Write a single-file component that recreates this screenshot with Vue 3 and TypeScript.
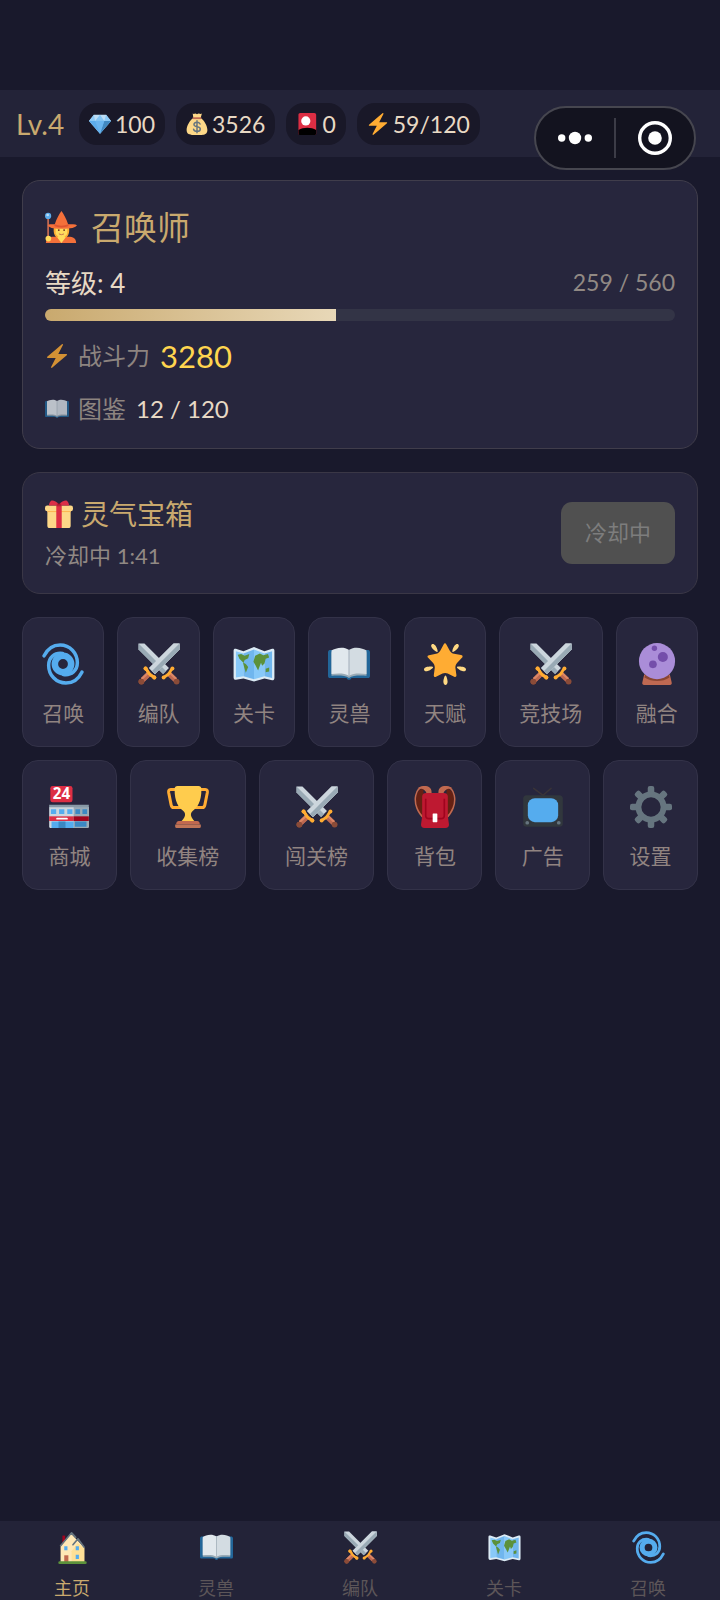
<script setup lang="ts">
interface Entry {
  icon: string
  label: string
  badge?: string
}

const resources: { icon: string; name: string; value: string }[] = [
  { icon: 'gem', name: '钻石', value: '100' },
  { icon: 'money', name: '金币', value: '3526' },
  { icon: 'card', name: '卡牌', value: '0' },
  { icon: 'bolt', name: '体力', value: '59/120' },
]

const exp = { current: 259, max: 560 }

const entries: Entry[] = [
  { icon: 'cyclone', label: '召唤' },
  { icon: 'swords', label: '编队' },
  { icon: 'map', label: '关卡' },
  { icon: 'book', label: '灵兽' },
  { icon: 'star', label: '天赋' },
  { icon: 'swords', label: '竞技场' },
  { icon: 'orb', label: '融合' },
  { icon: 'store', label: '商城', badge: '24' },
  { icon: 'trophy', label: '收集榜' },
  { icon: 'swords', label: '闯关榜' },
  { icon: 'bag', label: '背包' },
  { icon: 'tv', label: '广告' },
  { icon: 'gear', label: '设置' },
]

const tabs: (Entry & { href: string })[] = [
  { icon: 'house', label: '主页', href: '#home' },
  { icon: 'book', label: '灵兽', href: '#beasts' },
  { icon: 'swords', label: '编队', href: '#team' },
  { icon: 'map', label: '关卡', href: '#stages' },
  { icon: 'cyclone', label: '召唤', href: '#summon' },
]
</script>

<template>
  <div class="page">
    <svg class="sprite" width="0" height="0" aria-hidden="true">
      <symbol id="i-gem" viewBox="0 0 36 36">
        <path fill="#BDDDF4" d="M8 3h20l8 10-18 21L0 13z" />
        <path fill="#5DADEC" d="M0 13l18 21 18-21z" />
        <path fill="#8CCAF7" d="M8 3L0 13h10zM28 3l-3 10h11z" />
        <path fill="#4289C1" d="M36 13H25l-7 21z" />
        <path fill="#82C4F3" d="M10 13l8-10 7 10z" />
        <path fill="#6BB6F0" d="M10 13h15l-7 21z" />
      </symbol>
      <symbol id="i-money" viewBox="0 0 36 36">
        <path fill="#FDD888" d="M11 1c2 1 3 0 4 0s2 1 3 1 2-1 3-1 3 1 5 0l-2 7c6 4 11 13 11 20 0 6-4 8-9 8H10c-5 0-9-2-9-8C1 21 6 12 12 8z" />
        <path fill="#BF6952" d="M11 7h14v3H11z" />
        <path fill="none" stroke="#67757F" stroke-width="2.400" stroke-linecap="round" d="M23 18c-1-2-3-3-5-3-3 0-5 1.300-5 3.800 0 5.200 10.400 2.200 10.400 7.200 0 2.500-2 4-5.400 4-3 0-5-1.200-5.600-3.500M18 12.500v20" />
      </symbol>
      <symbol id="i-card" viewBox="0 0 36 36">
        <rect x="4" width="29" height="36" rx="3" fill="#DD2E44" />
        <path fill="#000" d="M4 28c8-5 21-5 29 0v5c0 2-1 3-3 3H7c-2 0-3-1-3-3z" />
        <circle cx="16" cy="13" r="7.500" fill="#FFF" />
      </symbol>
      <symbol id="i-bolt" viewBox="0 0 36 36">
        <path fill="#FFAC33" d="M32.938 15.651C32.792 15.260 32.418 15 32 15H19.925L26.890 1.458c.219-.426.106-.947-.271-1.243C26.437.071 26.218 0 26 0c-.233 0-.466.082-.653.243L18 6.588 3.347 19.243c-.316.273-.430.714-.284 1.105S3.582 21 4 21h12.075L9.110 34.542c-.219.426-.106.947.271 1.243.182.144.401.215.619.215.233 0 .466-.082.653-.243L18 29.412l14.653-12.655c.317-.273.430-.714.285-1.106z" />
      </symbol>
      <symbol id="i-mage" viewBox="0 0 36 36">
        <path fill="#BF6952" d="M2.500 7h2v24h-2z" />
        <path fill="#F4703A" d="M1 36c0-5 4-7 9-7h16c6 0 9 2 9 7z" />
        <path fill="#FFDC5D" d="M11 17h15v7c0 3-2 5-3 6l-4.500 6-4.500-6c-1-1-3-3-3-6z" />
        <path fill="#FFAC33" d="M10 18h2v8l3 3-1 1c-3-1-5-5-4-12zM27 18h-2v8l-3 3 1 1c3-1 5-5 4-12z" />
        <path fill="#F4703A" d="M18.500 0C21 3 24 9 26 15c4 0 8 0 10 1-3 4-11 4-17.500 4S6 20 3 16c1-1 4-1 8-1 2-6 5-12 7.500-15z" />
        <path fill="#DD5530" d="M11 15c4 2 11 2 15 0l.500 2c-4 2-12 2-16 0z" />
        <circle cx="15.500" cy="21.500" r="1" fill="#662113" />
        <circle cx="21.500" cy="21.500" r="1" fill="#662113" />
        <path fill="none" stroke="#C1694F" stroke-linecap="round" d="M16 26q2.500 1.500 5 0" />
        <circle cx="3.500" cy="5.500" r="3.500" fill="#5DADEC" />
        <circle cx="3" cy="4.500" r="1.500" fill="#BDDDF4" />
        <circle cx="3.800" cy="31" r="3.200" fill="#FFDC5D" />
      </symbol>
      <symbol id="i-gift" viewBox="0 0 36 36">
        <path fill="#FDD888" d="M3 14h30v19c0 2-1 3-3 3H6c-2 0-3-1-3-3z" />
        <path fill="#FCAB40" d="M3 14h30v1.500H3z" />
        <rect y="7" width="36" height="7.500" rx="3" fill="#FDD888" />
        <path fill="#DD2E44" d="M14.500 7h7v29h-7z" />
        <path fill="#DA2F47" d="M18 6C15 2 10 0 8 1S5 6 5 7h26c0-1-1-5-3-6s-7 1-10 5z" />
        <path fill="#A0041E" d="M15 6c0-3 6-3 6 0v2h-6z" opacity=".5" />
      </symbol>
      <symbol id="i-cyclone" viewBox="0 0 36 36">
        <circle cx="18" cy="18" r="7" fill="none" stroke="#55ACEE" stroke-width="5.600" />
        <g id="cyclone-arm" fill="none" stroke="#55ACEE" stroke-width="3" stroke-linecap="round">
          <path d="M1.800 11C5 4.500 10 1.700 15.500 1.700 24 1.700 30.300 8.500 30.300 17c0 6.500-5 11-12 10" />
        </g>
        <use href="#cyclone-arm" transform="rotate(180 18 18)" />
      </symbol>
      <symbol id="i-swords" viewBox="0 0 36 36">
        <g id="sword">
          <path fill="#CCD6DD" d="M35.500.500v5L14.500 26.500l-5-5L30.500.500z" />
          <path fill="#99AAB5" d="M35.500.500v5L14.500 26.500 12 24z" />
          <path fill="#BE6951" d="M8.800 24.200l3 3-6.300 6-3-3z" />
          <path fill="#DD8766" d="M8.800 24.200l1.300 1.300-6.300 6-1.300-1.300z" />
          <circle cx="2.900" cy="33.100" r="2.500" fill="#8A4B38" />
          <path fill="none" stroke="#FFAC33" stroke-width="2.400" stroke-linecap="round" stroke-linejoin="round" d="M6.500 22c1 .500 1.500 1.500 2.500 3.500s3 2.500 5 4" />
          <circle cx="6.500" cy="21.800" r="1.700" fill="#FFAC33" />
          <circle cx="14" cy="29.500" r="1.700" fill="#FFAC33" />
        </g>
        <g transform="translate(36 0) scale(-1 1)"><use href="#sword" /></g>
        <use href="#sword" />
      </symbol>
      <symbol id="i-map" viewBox="0 0 36 36">
        <path fill="#DCEBF5" d="M.500 6.500C.500 5 1.500 4.700 2.500 5l6.500 2 9-3.500L27 7l6.500-2c1-.300 2 0 2 1.500V30c0 1.500-1 2.200-2 2L27 30.500 18 33l-9-2.500-6.500 1c-1 .200-2-.500-2-2z" />
        <path fill="#88C9F9" d="M2.500 7L9 9v19.500l-6.500 1zM18 5.500L27 9v19.500l-9 2.500z" />
        <path fill="#5DADEC" d="M9 9l9-3.500V31l-9-2.500zM27 9l6.500-2v23L27 28.500z" opacity=".85" />
        <path fill="#5C913B" d="M4 10l3-.500 3 1.500 4-1.500-1 3.500-3 1.500-1 2.500 2 1 2 2.500-2 5-1.500-5-1-4-3-3zM19 11l4-2 3 1.500 4-1 1 3-3 1-1 4-2 2-1-2.500-1 2.500-1.500 4-2-4-2-3.500zM28 22l3-1v3.500l-3 .500z" />
      </symbol>
      <symbol id="i-book" viewBox="0 0 36 36">
        <path fill="#226699" d="M0 8c0-1.500 1-2 2-2h32c1 0 2 .500 2 2v20c0 1.500-.500 2-2 2H20c0 1-1 1.500-2 1.500S16 31 16 30H2c-1.500 0-2-.500-2-2z" />
        <path fill="#99AAB5" d="M3 8h30v20c-6 0-12-.500-15 2-3-2.500-9-2-15-2z" />
        <path fill="#E1E8ED" d="M3 6.500C6 4.500 13 2.500 18 6v22c-4-2.500-10-2-15-1.500z" />
        <path fill="#D3DCE2" d="M33 6.500C30 4.500 23 2.500 18 6v22c4-2.500 10-2 15-1.500z" />
        <path fill="#A9B6C0" d="M17.500 5.800h1V28h-1z" />
      </symbol>
      <symbol id="i-star" viewBox="0 0 36 36">
        <path fill="#FFD983" d="M9.783 2.181c1.023 1.413 2.446 4.917 1.717 5.447-.728.531-3.607-1.910-4.630-3.323-1.022-1.413-.935-2.668-.131-3.254.804-.587 2.020-.282 3.044 1.130zM29.131 4.305C28.109 5.718 25.230 8.160 24.500 7.627c-.729-.530.695-4.033 1.719-5.445C27.242.768 28.457.463 29.262 1.051c.803.586.890 1.841-.131 3.254zM16.625 33.291c-.001-1.746.898-5.421 1.801-5.421.897 0 1.798 3.675 1.797 5.420 0 1.747-.804 2.712-1.800 2.710-.994.002-1.798-.962-1.798-2.709zM32.804 24.029c-1.655-.539-4.858-2.533-4.579-3.395.277-.858 4.037-.581 5.690-.041 1.655.540 2.321 1.605 2.013 2.556-.308.950-1.469 1.420-3.124.880zM2.083 20.594c1.655-.540 5.414-.817 5.694.044.276.857-2.928 2.854-4.581 3.392-1.654.540-2.818.070-3.123-.880-.308-.950.354-2.015 2.010-2.556z" />
        <g transform="translate(.900 .300) scale(.950)">
          <path fill="#FFAC33" d="M28.840 17.638c-.987 1.044-1.633 3.067-1.438 4.493l.892 6.441c.197 1.427-.701 2.087-1.996 1.469l-5.851-2.796c-1.295-.620-3.408-.611-4.700.018l-5.826 2.842c-1.291.629-2.193-.026-2.007-1.452l.843-6.449c.186-1.427-.475-3.444-1.470-4.481l-4.494-4.688c-.996-1.037-.655-2.102.755-2.365l6.370-1.188c1.410-.263 3.116-1.518 3.793-2.789L16.762.956c.675-1.271 1.789-1.274 2.473-.009L22.330 6.660c.686 1.265 2.400 2.507 3.814 2.758l6.378 1.141c1.412.252 1.761 1.314.774 2.359l-4.456 4.720z" />
        </g>
      </symbol>
      <symbol id="i-orb" viewBox="0 0 36 36">
        <path fill="#BF6952" d="M7 27h22l1.500 6.500c.500 1.500 0 2.500-1.500 2.500H7c-1.500 0-2-1-1.500-2.500z" />
        <path fill="#8A4633" d="M8 27h20l.700 2.500c-6 4-15 4-21.400 0z" />
        <circle cx="18" cy="15.500" r="15.500" fill="#AA8DD8" />
        <circle cx="15.800" cy="4.500" r="2.300" fill="#744EAA" />
        <circle cx="23" cy="12" r="4.300" fill="#744EAA" />
        <circle cx="14.500" cy="18.300" r="3.300" fill="#744EAA" />
      </symbol>
      <symbol id="i-store" viewBox="0 0 36 36">
        <path fill="#CCD6DD" d="M1 18h34v17c0 .600-.400 1-1 1H2c-.600 0-1-.400-1-1z" />
        <path fill="#99AAB5" d="M22 18h13v17l-1 1H22z" />
        <path fill="#8899A6" d="M1 16h34v2.200H1z" />
        <path fill="#55ACEE" d="M2.500 20h4.500v4H2.500zM9.500 20h4.500v4H9.500zM16.500 20h4.500v4h-4.500zM3 30.500h19V36H3z" />
        <path fill="#3B88C3" d="M23.500 20h4v4h-4zM29.500 20h4v4h-4zM23 30.500h10V35H23zM9 30.500h6V36H9z" />
        <path fill="#DD2E44" d="M1 26h21v4H1z" />
        <path fill="#A0041E" d="M22 26h13v4H22z" />
        <rect x="7" y="27.200" width="10" height="1.600" rx=".8" fill="#FFF" />
        <rect x="2" width="19" height="14" rx="2" fill="#DD2E44" />
      </symbol>
      <symbol id="i-trophy" viewBox="0 0 36 36">
        <path fill="none" stroke="#FFAC33" stroke-width="2.600" stroke-linejoin="round" d="M9 3H3.200C1.500 3 1.200 4 1.500 6l2 10c.300 1.700 1 2.500 2.500 2.500h6M27 3h5.800c1.700 0 2 1 1.700 3l-2 10c-.300 1.700-1 2.500-2.500 2.500h-6" />
        <path fill="#FFCC4D" d="M9 0h18c1.500 0 2.500 1 2.500 2.500C29.500 14 26 18 22 21.500c-1.500 1.500-2 3-1 5s2 3 3 4H12c1-1 2-2 3-4s.500-3.500-1-5C10 18 6.500 14 6.500 2.500 6.500 1 7.500 0 9 0z" />
        <path fill="#C1694F" d="M10 30h16c1 0 2 1 2 2v1H8v-1c0-1 1-2 2-2z" />
        <path fill="#BF7457" d="M7 33h22v2c0 .600-.400 1-1 1H8c-.600 0-1-.400-1-1z" />
      </symbol>
      <symbol id="i-bag" viewBox="0 0 36 36">
        <path fill="#662113" d="M8 2C3 3 1 8 2 15c1 6 4 12 7 14zM28 2c5 1 7 6 6 13-1 6-4 12-7 14z" />
        <path fill="none" stroke="#C1694F" stroke-width="1.300" d="M9 28C3 23 0 15 1.500 8 2.500 3 5 1 8 1M27 28c6-5 9-13 7.500-20C33.500 3 31 1 28 1" />
        <path fill="#C1694F" d="M3 2c3-2.500 9-3 11 0 1.500 2 1 4 1 6h-4c0-3-2-6-8-6zM33 2c-3-2.500-9-3-11 0-1.500 2-1 4-1 6h4c0-3 2-6 8-6z" />
        <path fill="#BE1931" d="M7 9c0-2 1.500-3 3.500-3h15c2 0 3.500 1 3.500 3v17l1 7c0 2-1 3-3 3H9c-2 0-3-1-3-3l1-7z" />
        <path fill="none" stroke="#A0041E" stroke-width="1.400" d="M10 11v14c0 2 1 3 3 3h10c2 0 3-1 3-3V11" />
        <rect x="16" y="23.500" width="4" height="7.500" rx=".5" fill="#FFF" />
      </symbol>
      <symbol id="i-tv" viewBox="0 0 36 36">
        <path fill="none" stroke="#3A3438" stroke-width="1.200" stroke-linecap="round" d="M10 2l8 6 7-6" />
        <rect x="1" y="8" width="34" height="27" rx="3" fill="#31373D" />
        <rect x="5" y="10.500" width="26" height="20.500" rx="6" fill="#55ACEE" />
        <circle cx="4.500" cy="31.500" r="1.600" fill="#66757F" />
        <circle cx="31.500" cy="31.500" r="1.600" fill="#66757F" />
      </symbol>
      <symbol id="i-gear" viewBox="0 0 36 36">
        <circle cx="18" cy="18" r="10.800" fill="none" stroke="#66757F" stroke-width="5" />
        <g fill="#66757F">
          <g id="gear-teeth">
            <rect x="15.200" width="5.600" height="8" rx="1.800" />
            <rect x="15.200" y="28" width="5.600" height="8" rx="1.800" />
          </g>
          <use href="#gear-teeth" transform="rotate(45 18 18)" />
          <use href="#gear-teeth" transform="rotate(90 18 18)" />
          <use href="#gear-teeth" transform="rotate(135 18 18)" />
        </g>
      </symbol>
      <symbol id="i-house" viewBox="0 0 36 36">
        <path fill="#A0041E" d="M7 5h3v9H7z" />
        <path fill="#FFE8B6" d="M5 17L16.500 3l7.500 8 7 7v16H5z" />
        <path fill="#FFCC4D" d="M17 22l6.500-9 7.500 6v15H17z" opacity=".3" />
        <path fill="none" stroke="#66757F" stroke-width="1.800" stroke-linecap="round" stroke-linejoin="round" d="M5 16L17 2l4.500 5M18.500 15L24 8.500l6.500 9" />
        <path fill="#55ACEE" d="M9 16.500h3.500V21H9zM21.500 16.500H25V21h-3.500zM21.500 26H25v4.500h-3.500z" />
        <path fill="#C1694F" d="M9 26.500h4.500V34H9z" />
        <rect x="2.500" y="33" width="31" height="3" rx="1.500" fill="#5C913B" />
      </symbol>
    </svg>

    <header class="topbar">
      <span class="level">Lv.4</span>
      <span v-for="r in resources" :key="r.icon" class="pill">
        <svg role="img" :aria-label="r.name"><use :href="'#i-' + r.icon" /></svg>
        <span>{{ r.value }}</span>
      </span>
      <div class="capsule">
        <button type="button" aria-label="更多">
          <svg class="dots" viewBox="0 0 34 14">
            <circle cx="3.700" cy="7" r="3.700" />
            <circle cx="17" cy="7" r="6.200" />
            <circle cx="30.300" cy="7" r="3.700" />
          </svg>
        </button>
        <button type="button" aria-label="关闭">
          <svg class="target" viewBox="0 0 34 34">
            <circle cx="17" cy="17" r="15.300" fill="none" stroke="#fff" stroke-width="3.400" />
            <circle cx="17" cy="17" r="6.800" />
          </svg>
        </button>
      </div>
    </header>

    <main>
      <section class="panel profile">
        <h1><svg aria-hidden="true"><use href="#i-mage" /></svg>召唤师</h1>
        <div class="level-row">
          <span>等级: 4</span>
          <span class="exp">{{ exp.current }} / {{ exp.max }}</span>
        </div>
        <div class="track" role="progressbar" aria-label="经验" :aria-valuenow="exp.current" :aria-valuemax="exp.max">
          <div class="fill" :style="{ width: (exp.current / exp.max) * 100 + '%' }"></div>
        </div>
        <p class="stat power">
          <span class="name"><svg aria-hidden="true"><use href="#i-bolt" /></svg>战斗力</span>
          <strong>3280</strong>
        </p>
        <p class="stat">
          <span class="name"><svg aria-hidden="true"><use href="#i-book" /></svg>图鉴</span>
          <span>12 / 120</span>
        </p>
      </section>

      <section class="panel chest">
        <div>
          <h2><svg aria-hidden="true"><use href="#i-gift" /></svg>灵气宝箱</h2>
          <p>冷却中 1:41</p>
        </div>
        <button type="button" disabled>冷却中</button>
      </section>

      <section class="grid">
        <button v-for="e in entries" :key="e.label" type="button" class="tile">
          <svg viewBox="0 0 36 36" aria-hidden="true">
            <use :href="'#i-' + e.icon" />
            <text v-if="e.badge" class="badge" x="11.500" y="11.500" text-anchor="middle">{{ e.badge }}</text>
          </svg>
          <span>{{ e.label }}</span>
        </button>
      </section>
    </main>

    <nav class="tabs">
      <a v-for="(t, i) in tabs" :key="t.label" :href="t.href" :class="{ active: i === 0 }">
        <svg aria-hidden="true"><use :href="'#i-' + t.icon" /></svg>
        <span>{{ t.label }}</span>
      </a>
    </nav>
  </div>
</template>

<style>
body {
  margin: 0;
  background: #19192c;
}
</style>

<style scoped>
* {
  box-sizing: border-box;
}

.page {
  display: flex;
  flex-direction: column;
  min-height: 100vh;
  padding-top: 90px;
  background: #19192c;
  color: #e8d9c4;
  font-family: Lato, "Noto Sans CJK SC", sans-serif;
  font-weight: 400;
}

.sprite {
  position: absolute;
}

svg {
  display: block;
  flex: none;
}

button {
  margin: 0;
  padding: 0;
  border: 0;
  background: none;
  color: inherit;
  font: inherit;
}

h1,
h2,
p {
  margin: 0;
  font-weight: 400;
}

.topbar {
  position: relative;
  display: flex;
  align-items: center;
  gap: 11px;
  height: 67px;
  padding: 0 16px;
  background: #232338;
}

.level {
  min-width: 52px;
  color: #c9a96e;
  font-size: 28px;
  line-height: 42px;
}

.pill {
  display: flex;
  align-items: center;
  gap: 4px;
  height: 42px;
  padding: 0 10px;
  border-radius: 18px;
  background: #191828;
  font-size: 23px;
}

.pill svg {
  width: 22px;
  height: 22px;
}

.capsule {
  position: absolute;
  top: 16px;
  right: 24px;
  display: flex;
  align-items: center;
  width: 162px;
  height: 64px;
  border: 2px solid #46464f;
  border-radius: 32px;
  background: #13131f;
}

.capsule button {
  display: flex;
  flex: 1;
  align-items: center;
  justify-content: center;
  height: 40px;
}

.capsule button + button {
  border-left: 2px solid #3c3c47;
}

.capsule svg {
  fill: #fff;
}

.dots {
  width: 34px;
  height: 14px;
}

.target {
  width: 34px;
  height: 34px;
}

main {
  display: flex;
  flex-direction: column;
  gap: 23px;
  padding: 23px 22px;
}

.panel {
  padding: 22px;
  border: 1px solid #403d4b;
  border-radius: 18px;
  background: #27263d;
}

h1 {
  display: flex;
  align-items: center;
  gap: 14px;
  color: #c9a96e;
  font-size: 33px;
  line-height: 48px;
}

h1 svg {
  width: 32px;
  height: 34px;
}

.level-row {
  display: flex;
  justify-content: space-between;
  margin-top: 13px;
  font-size: 26px;
  line-height: 38px;
}

.exp {
  color: #918984;
  font-size: 23px;
  line-height: 36px;
}

.track {
  height: 12px;
  margin-top: 7px;
  border-radius: 6px;
  background: #333446;
  overflow: hidden;
}

.fill {
  height: 100%;
  background: linear-gradient(90deg, #c9a96e, #e8d8b8);
}

.stat {
  display: flex;
  align-items: center;
  gap: 10px;
  margin-top: 17px;
  font-size: 24px;
  line-height: 34px;
}

.stat .name {
  display: flex;
  align-items: center;
  gap: 9px;
  color: #8d8480;
}

.name svg {
  width: 24px;
  height: 24px;
  opacity: 0.8;
}

.stat.power {
  margin-top: 16px;
  line-height: 38px;
}

.power strong {
  color: #ffd54f;
  font-size: 31px;
  font-weight: 400;
}

.chest {
  display: flex;
  align-items: center;
  justify-content: space-between;
  border-color: #3a3746;
}

h2 {
  display: flex;
  align-items: center;
  gap: 8px;
  color: #c9a96e;
  font-size: 28px;
  line-height: 38px;
}

h2 svg {
  width: 28px;
  height: 28px;
}

.chest p {
  margin-top: 8px;
  color: #918984;
  font-size: 22px;
  line-height: 30px;
}

.chest button {
  padding: 0 24px;
  border-radius: 11px;
  background: #505050;
  color: #7d7d7d;
  font-size: 22px;
  line-height: 62px;
}

.grid {
  display: flex;
  flex-wrap: wrap;
  gap: 13px;
}

.tile {
  display: flex;
  flex: 1 1 auto;
  flex-direction: column;
  align-items: center;
  gap: 13px;
  padding: 25px 18px 18px;
  border: 1px solid #333248;
  border-radius: 16px;
  background: #27263d;
  color: #918481;
  font-size: 21px;
  line-height: 30px;
}

.tile svg {
  width: 42px;
  height: 42px;
}

.badge {
  fill: #fff;
  font-family: "Open Sans", sans-serif;
  font-size: 13px;
  font-weight: 700;
}

.tabs {
  display: flex;
  margin-top: auto;
  background: #232338;
}

.tabs a {
  display: flex;
  flex: 1;
  flex-direction: column;
  align-items: center;
  gap: 12px;
  padding-top: 10px;
  color: #5d5659;
  font-size: 18px;
  line-height: 24px;
  text-decoration: none;
}

.tabs a.active {
  color: #c9a96e;
}

.tabs svg {
  width: 33px;
  height: 33px;
}
</style>
